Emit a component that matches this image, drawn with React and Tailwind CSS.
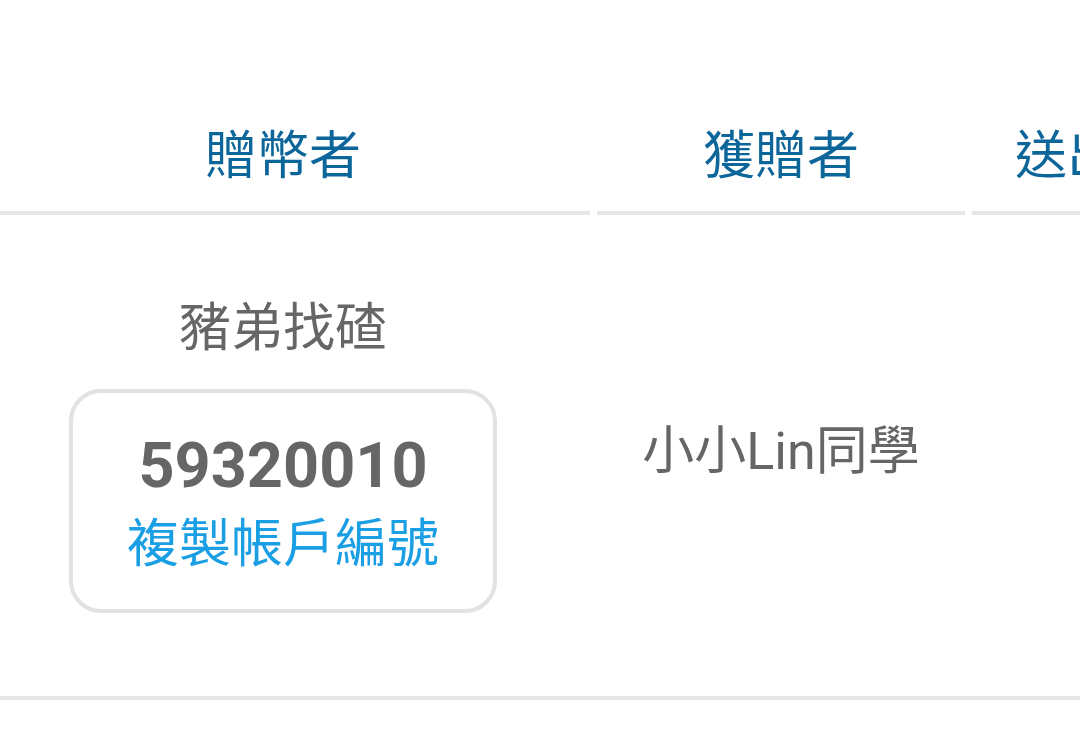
import React from "react";

const columns = [
  { key: "giver", title: "贈幣者", width: "w-[614px]" },
  { key: "receiver", title: "獲贈者", width: "w-[368px]" },
  { key: "sent", title: "送出時間", width: "w-[294px]" },
];

const row = {
  giver: "豬弟找碴",
  account: "59320010",
  receiver: "小小Lin同學",
};

export default function App() {
  return (
    <div
      className="w-[1080px] h-[741px] overflow-hidden bg-white"
      style={{ fontFamily: 'Roboto, "Noto Sans CJK TC", sans-serif' }}
    >
      <div className="ml-[-24px] w-[1290px]">
        {/* header */}
        <div className="flex gap-[7px] pt-[127px]">
          {columns.map((c) => (
            <div
              key={c.key}
              className={`${c.width} shrink-0 border-b-4 border-[#e6e6e6] pb-[24px] text-center text-[52px] leading-[60px] text-[#0d6699]`}
            >
              {c.title}
            </div>
          ))}
        </div>

        {/* body row */}
        <div className="flex gap-[7px] h-[485px] border-b-4 border-[#e6e6e6]">
          <div className="w-[614px] shrink-0 flex flex-col items-center justify-center">
            <div className="text-[52px] leading-[60px] text-[#666666]">{row.giver}</div>
            <div className="mt-[30px] w-[428px] h-[224px] border-4 border-[#e2e2e2] rounded-[32px] flex flex-col items-center justify-center pt-[8px]">
              <div className="text-[63px] leading-[62px] font-bold text-[#666666]">{row.account}</div>
              <button className="mt-[18px] text-[52px] leading-[60px] text-[#1b9fe4]">複製帳戶編號</button>
            </div>
          </div>
          <div className="w-[368px] shrink-0 flex items-center justify-center">
            <div className="mb-[8px] text-[52px] leading-[60px] text-[#666666]">{row.receiver}</div>
          </div>
          <div className="w-[294px] shrink-0" />
        </div>
      </div>
    </div>
  );
}
